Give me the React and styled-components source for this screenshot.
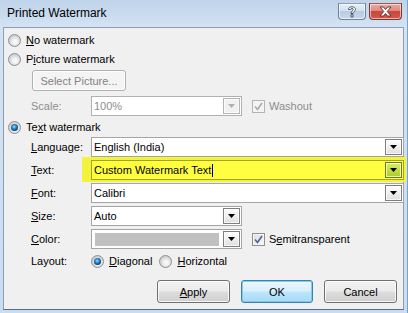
import React from 'react';
import styled, { createGlobalStyle } from 'styled-components';

const Global = createGlobalStyle`
  html, body { margin: 0; padding: 0; width: 408px; height: 313px; overflow: hidden; background: #fff; }
  #root { width: 408px; height: 313px; }
  * { box-sizing: border-box; }
`;

const Window = styled.div`
  width: 408px;
  height: 313px;
  display: flex;
  flex-direction: column;
  background: linear-gradient(to bottom, #bfd3ea 0px, #c8dbef 14px, #d4e3f3 27px, #cadcef 100%);
  border-right: 1px solid #6fa8c8;
  font-family: "Liberation Sans", Arial, sans-serif;
  font-size: 11px;
  color: #000;
`;

const TitleBar = styled.div`
  height: 27px;
  display: flex;
  align-items: flex-start;
  padding: 0 5px 0 7px;
`;

const Title = styled.div`
  font-size: 12px;
  line-height: 27px;
  color: #000;
`;

const CaptionButtons = styled.div`
  margin-left: auto;
  padding-top: 3px;
  display: flex;
  gap: 3px;
`;

const CaptionButton = styled.div`
  height: 17px;
  width: ${p => p.$w}px;
  border: 1px solid ${p => (p.$close ? '#7c3731' : '#71829a')};
  border-top-color: ${p => (p.$close ? '#a2564f' : '#8fa0b6')};
  border-radius: 0 0 4px 4px;
  background: ${p =>
    p.$close
      ? 'linear-gradient(to bottom, #e9aba3 0%, #dc8a7f 45%, #c9483b 50%, #d0594a 100%)'
      : 'linear-gradient(to bottom, #e6eef8 0%, #d3e0ef 45%, #b9cbe0 50%, #c9d8ea 100%)'};
  box-shadow: inset 0 0 0 1px rgba(255, 255, 255, 0.55);
  display: flex;
  align-items: center;
  justify-content: center;
`;

const Body = styled.div`
  flex: 1;
  margin: 0 3px 3px 3px;
  border: 1px solid #8d9eb4;
  border-bottom-color: #4d6f8f;
  background: #f0f0f0;
  padding: 3px 0 0 4px;
  display: flex;
  flex-direction: column;
`;

const RadioRow = styled.label`
  height: 18px;
  display: flex;
  align-items: center;
  gap: 5px;
  margin-top: ${p => p.$mt || 0}px;
  margin-left: ${p => p.$ml || 0}px;
`;

const RadioCircle = styled.span`
  width: 13px;
  height: 13px;
  flex: none;
  border-radius: 50%;
  border: 1px solid #8c8f92;
  background: radial-gradient(circle at 55% 60%, #f6f6f6 0 2px, #e2e2e2 4px, #cfcfcf 6px);
  display: flex;
  align-items: center;
  justify-content: center;
  &::after {
    content: '';
    width: 7px;
    height: 7px;
    border-radius: 50%;
    background: radial-gradient(circle at 45% 40%, #a8e4ff 0, #3aa0e0 1.5px, #16609f 3px, #0d3f73 4px);
    display: ${p => (p.$checked ? 'block' : 'none')};
  }
`;

const Indent = styled.div`
  padding-left: 23px;
  display: flex;
  flex-direction: column;
`;

const PushButton = styled.div`
  width: ${p => p.$w}px;
  height: ${p => p.$h || 23}px;
  border: 1px solid ${p => (p.$disabled ? '#adb2b5' : p.$default ? '#3c7fb1' : '#707070')};
  border-radius: 3px;
  background: ${p =>
    p.$disabled
      ? '#f4f4f4'
      : p.$default
      ? 'linear-gradient(to bottom, #eaf6fd 0%, #d9f0fc 48%, #bee6fd 52%, #a7d9f5 100%)'
      : 'linear-gradient(to bottom, #f2f2f2 0%, #ebebeb 48%, #dddddd 52%, #cfcfcf 100%)'};
  box-shadow: inset 0 0 0 1px ${p => (p.$default ? 'rgba(120,200,240,0.9)' : 'rgba(255,255,255,0.8)')};
  color: ${p => (p.$disabled ? '#838383' : '#000')};
  display: flex;
  align-items: center;
  justify-content: center;
  margin-left: ${p => p.$ml || 0}px;
  margin-top: ${p => p.$mt || 0}px;
`;

const Grid = styled.div`
  display: grid;
  grid-template-columns: 60px 1fr;
  grid-template-rows: ${p => p.$rows};
  row-gap: 3px;
  align-items: center;
  margin-top: ${p => p.$mt || 0}px;
`;

const Label = styled.div`
  color: ${p => (p.$disabled ? '#8d8d8d' : '#000')};
`;

const FieldCell = styled.div`
  display: flex;
  align-items: center;
  height: 100%;
  gap: 10px;
`;

const Highlight = styled.div`
  position: relative;
  z-index: 0;
  height: 100%;
  width: 313px;
  &::before {
    content: '';
    position: absolute;
    left: -9px;
    right: -2px;
    top: -3px;
    bottom: -2px;
    background: #f3f33d;
    z-index: -1;
  }
`;

const Field = styled.div`
  width: ${p => (p.$w ? `${p.$w}px` : '100%')};
  height: 100%;
  border: 1px solid ${p => (p.$hl ? '#a3a32a' : p.$disabled ? '#b1b1b1' : '#a5a5a5')};
  background: ${p => (p.$hl ? '#ffff40' : '#fff')};
  display: flex;
  align-items: stretch;
  color: ${p => (p.$disabled ? '#8d8d8d' : '#000')};
`;

const FieldText = styled.div`
  flex: 1;
  padding-left: 2px;
  display: flex;
  align-items: center;
  white-space: nowrap;
  overflow: hidden;
`;

const Caret = styled.span`
  display: inline-block;
  width: 1px;
  height: 13px;
  background: #000;
  margin-left: 1px;
`;

const Swatch = styled.div`
  flex: 1;
  margin: 3px 3px 2px 3px;
  background: #c0c0c0;
`;

const DropButton = styled.div`
  width: 17px;
  margin: 1px;
  border: 1px solid ${p => (p.$hl ? '#6f7a1c' : p.$disabled ? '#b5b5b5' : '#7e7e7e')};
  background: ${p =>
    p.$hl
      ? 'linear-gradient(to bottom, #d9ee62, #aacb2c)'
      : p.$disabled
      ? '#f1f1f1'
      : 'linear-gradient(to bottom, #ffffff, #dedede)'};
  box-shadow: inset 0 0 0 1px rgba(255, 255, 255, 0.7);
  display: flex;
  align-items: center;
  justify-content: center;
`;

const CheckRow = styled.label`
  display: flex;
  align-items: center;
  gap: 4px;
  color: ${p => (p.$disabled ? '#8d8d8d' : '#000')};
`;

const CheckBox = styled.span`
  width: 13px;
  height: 13px;
  flex: none;
  border: 1px solid ${p => (p.$disabled ? '#b4b4b4' : '#8e8f8f')};
  background: ${p => (p.$disabled ? '#f4f4f4' : 'linear-gradient(135deg, #dcdcdc, #fafafa)')};
  box-shadow: inset 0 0 0 1px #f4f4f4;
  display: flex;
  align-items: center;
  justify-content: center;
`;

const LayoutCell = styled.div`
  display: flex;
  align-items: center;
`;

const ButtonRow = styled.div`
  display: flex;
  justify-content: flex-end;
  gap: 11px;
  padding-right: 6px;
  margin-top: 10px;
`;

const DownArrow = ({ color = '#000' }) => (
  <svg width="7" height="4" viewBox="0 0 7 4">
    <polygon points="0,0 7,0 3.5,4" fill={color} />
  </svg>
);

const Check = ({ color }) => (
  <svg width="9" height="9" viewBox="0 0 9 9">
    <polyline points="1,4.5 3.5,7.5 8,1" fill="none" stroke={color} strokeWidth="1.6" />
  </svg>
);

const Combo = ({ w, hl, disabled, children }) => (
  <Field $w={w} $hl={hl} $disabled={disabled}>
    {children}
    <DropButton $hl={hl} $disabled={disabled}>
      <DownArrow color={disabled ? '#b0b0b0' : '#000'} />
    </DropButton>
  </Field>
);

export default function App() {
  return (
    <>
      <Global />
      <Window>
        <TitleBar>
          <Title>Printed Watermark</Title>
          <CaptionButtons>
            <CaptionButton $w={28}>
              <svg width="10" height="12" viewBox="0 0 10 12">
                <path
                  d="M1.5 3.5 C1.5 1.5 3 0.8 5 0.8 C7 0.8 8.5 1.8 8.5 3.5 C8.5 5.2 6 5.5 6 7.5 L4 7.5 C4 5 6.3 4.8 6.3 3.5 C6.3 2.8 5.8 2.5 5 2.5 C4.2 2.5 3.6 2.9 3.6 3.5 Z M4 8.7 L6 8.7 L6 11 L4 11 Z"
                  fill="#fff"
                  stroke="#3c4a5e"
                  strokeWidth="0.9"
                />
              </svg>
            </CaptionButton>
            <CaptionButton $w={33} $close>
              <svg width="13" height="11" viewBox="0 0 13 11">
                <path
                  d="M1 1 L4.5 1 L6.5 3.5 L8.5 1 L12 1 L8.3 5.5 L12 10 L8.5 10 L6.5 7.5 L4.5 10 L1 10 L4.7 5.5 Z"
                  fill="#fff"
                  stroke="#6b2620"
                  strokeWidth="0.9"
                />
              </svg>
            </CaptionButton>
          </CaptionButtons>
        </TitleBar>
        <Body>
          <RadioRow>
            <RadioCircle />
            <span><u>N</u>o watermark</span>
          </RadioRow>
          <RadioRow $mt={1}>
            <RadioCircle />
            <span>P<u>i</u>cture watermark</span>
          </RadioRow>
          <Indent>
            <PushButton $w={94} $h={21} $ml={1} $mt={2} $disabled>
              Select Picture...
            </PushButton>
            <Grid $rows="20px" $mt={5}>
              <Label $disabled>Scale:</Label>
              <FieldCell>
                <Combo w={151} disabled>
                  <FieldText>100%</FieldText>
                </Combo>
                <CheckRow $disabled>
                  <CheckBox $disabled>
                    <Check color="#a8a8a8" />
                  </CheckBox>
                  <span>Washout</span>
                </CheckRow>
              </FieldCell>
            </Grid>
          </Indent>
          <RadioRow $mt={2}>
            <RadioCircle $checked />
            <span>Te<u>x</u>t watermark</span>
          </RadioRow>
          <Indent>
            <Grid $rows="20px 20px 20px 20px 20px 18px" $mt={1}>
              <Label><u>L</u>anguage:</Label>
              <FieldCell>
                <Combo w={313}>
                  <FieldText>English (India)</FieldText>
                </Combo>
              </FieldCell>
              <Label><u>T</u>ext:</Label>
              <FieldCell>
                <Highlight>
                  <Combo hl>
                    <FieldText>
                      Custom Watermark Text
                      <Caret />
                    </FieldText>
                  </Combo>
                </Highlight>
              </FieldCell>
              <Label><u>F</u>ont:</Label>
              <FieldCell>
                <Combo w={313}>
                  <FieldText>Calibri</FieldText>
                </Combo>
              </FieldCell>
              <Label><u>S</u>ize:</Label>
              <FieldCell>
                <Combo w={151}>
                  <FieldText>Auto</FieldText>
                </Combo>
              </FieldCell>
              <Label><u>C</u>olor:</Label>
              <FieldCell>
                <Combo w={151}>
                  <Swatch />
                </Combo>
                <CheckRow>
                  <CheckBox>
                    <Check color="#4a5f97" />
                  </CheckBox>
                  <span>S<u>e</u>mitransparent</span>
                </CheckRow>
              </FieldCell>
              <Label>Layout:</Label>
              <LayoutCell>
                <RadioRow>
                  <RadioCircle $checked />
                  <span><u>D</u>iagonal</span>
                </RadioRow>
                <RadioRow $ml={7}>
                  <RadioCircle />
                  <span><u>H</u>orizontal</span>
                </RadioRow>
              </LayoutCell>
            </Grid>
          </Indent>
          <ButtonRow>
            <PushButton $w={73}><span><u>A</u>pply</span></PushButton>
            <PushButton $w={72} $default>OK</PushButton>
            <PushButton $w={73}>Cancel</PushButton>
          </ButtonRow>
        </Body>
      </Window>
    </>
  );
}
